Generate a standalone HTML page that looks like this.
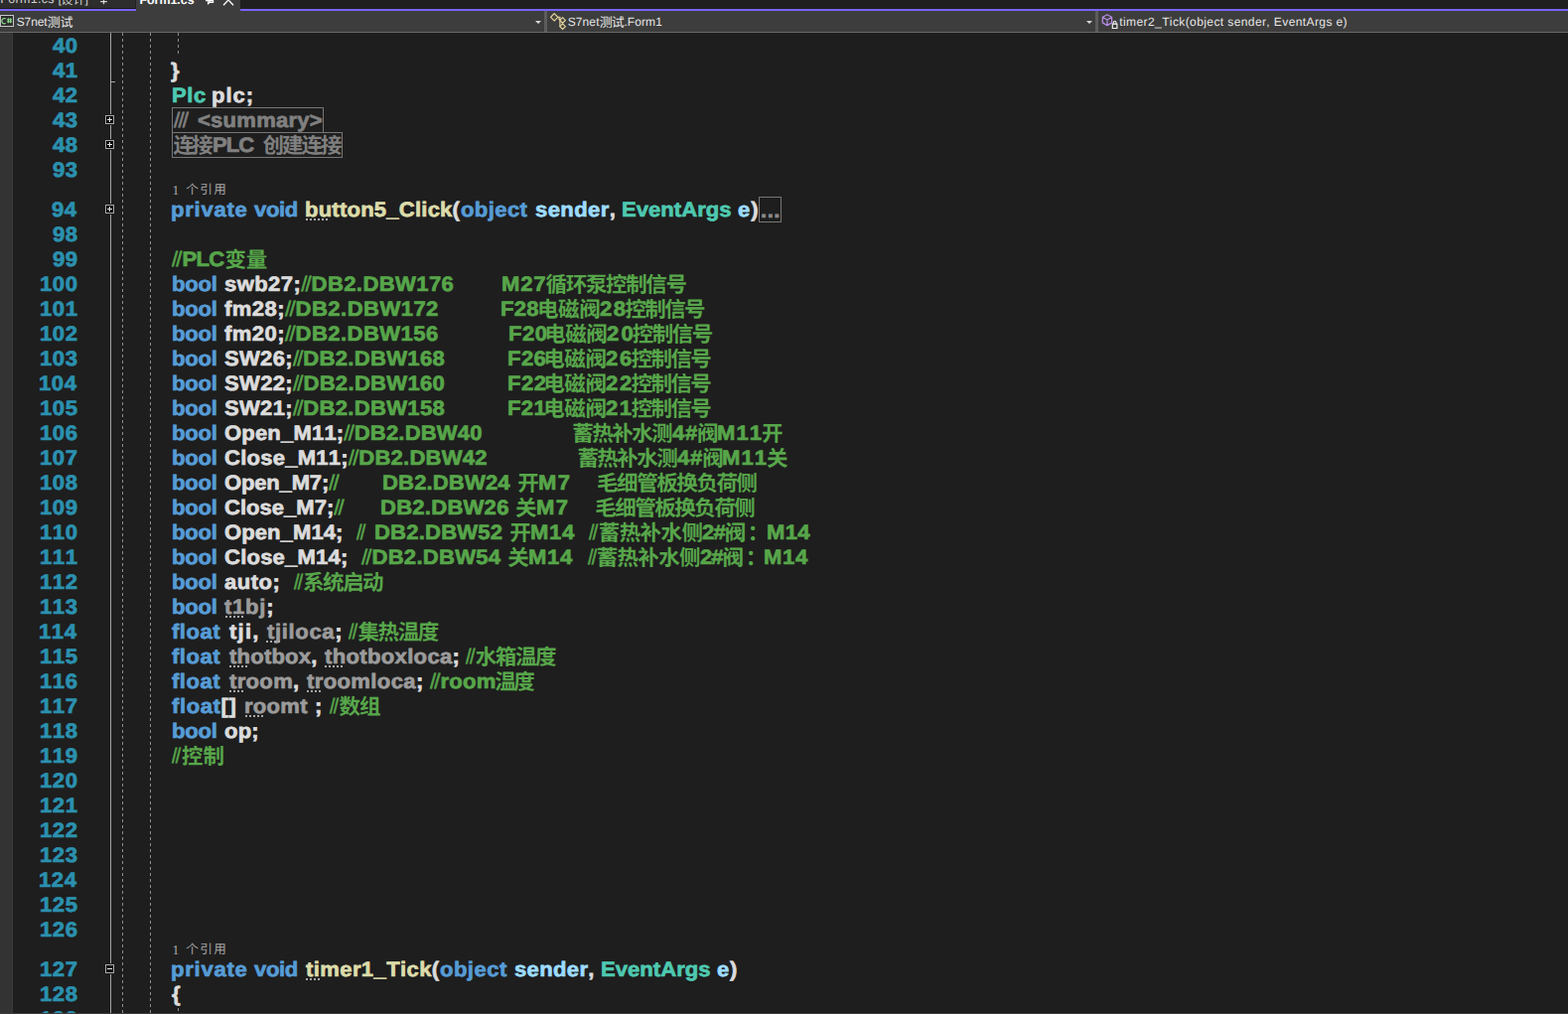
<!DOCTYPE html>
<html lang="zh"><head><meta charset="utf-8"><title>Form1.cs</title>
<style>
html,body{margin:0;padding:0;background:#1e1e1e}
body{width:1579px;height:1021px;overflow:hidden;position:relative;font-family:"Liberation Sans",sans-serif;text-rendering:geometricPrecision;font-kerning:none}
/* tab strip */
#tabs{position:absolute;left:0;top:0;width:1579px;height:11px;background:#1f1f1f;overflow:hidden}
.ic{position:absolute;overflow:visible}
#tab1{position:absolute;left:0;top:0;width:136px;height:8px;background:#2d2d2d;border-bottom:1px solid #1b1b17;border-right:1px solid #202020;box-sizing:content-box;overflow:hidden}
#tab2{position:absolute;left:0;top:0;width:242px;height:11px;background:linear-gradient(to right,transparent 137px,#3d3d3d 137px);overflow:hidden}
.tt{position:absolute;white-space:pre;font-size:12.5px;line-height:14px}
#accent{position:absolute;left:0;top:9px;width:137px;height:2px;background:#7864f8}
#accent2{position:absolute;left:242px;top:9px;width:1337px;height:2px;background:#7864f8}
#cs{position:absolute;left:0;top:4px;width:12px;height:10px;border:1px solid #c4c4c4;background:#2e2e2e}
#cs span{position:absolute;left:1px;top:0;font-size:8px;line-height:10px;color:transparent}
/* nav bar */
#nav{position:absolute;left:0;top:11px;width:1579px;height:21px;background:#3d3d3d;border-bottom:1px solid #686868}
.sep{position:absolute;top:0;width:3px;height:21px;background:#5c5c5c}
.arr{position:absolute;top:10px;width:0;height:0;border-left:3px solid transparent;border-right:3px solid transparent;border-top:3.5px solid #d8d8d8}
.nt{position:absolute;top:1px;white-space:pre;font-size:12px;line-height:21px;color:#e6e6e6}
/* editor */
#margin{position:absolute;left:0;top:33px;width:12px;height:988px;background:#333;border-right:1px solid #393939}
#bottom{position:absolute;left:0;top:1020px;width:1579px;height:1px;background:#3c3c3c}
#oline{position:absolute;left:111px;top:33px;width:1px;height:987px;background:#a6a6a6}
.tick{position:absolute;left:112px;top:82px;width:4px;height:1px;background:#a6a6a6}
.gd{position:absolute;width:1px;background:repeating-linear-gradient(to bottom,#8e8e8e 0,#8e8e8e 3px,transparent 3px,transparent 6px)}
.pm{position:absolute;left:105px;width:7px;height:7px;background:#000;border:1px solid #a8a8a8;outline:1px solid #1e1e1e;margin:1px}
.pm .h{position:absolute;left:1px;top:3px;width:5px;height:1px;background:#e4e4e4}
.pm .v{position:absolute;left:3px;top:1px;width:1px;height:5px;background:#e4e4e4}
.ln{position:absolute;left:0;width:1579px;height:25px}
.t{position:absolute;top:1.4px;transform-origin:0 0;transform:scaleX(1.055);white-space:pre;font-weight:bold;font-size:20.9px;line-height:25px;height:25px;-webkit-text-stroke:0.7px}
.t .s{font-weight:normal;letter-spacing:-1.7px;margin-right:1.7px;-webkit-text-stroke:0.5px}
.ck{color:#569cd6}.ct{color:#4ec9b0}.cw{color:#dcdcdc}.cm{color:#dcdcaa}.cp{color:#9cdcfe}.cc{color:#57a64a}.cg{color:#9b9b9b}.co{color:#808080}.cx{color:#8a8a8a}
.n{color:#2b91af;letter-spacing:.55px}
.cj{position:absolute;top:0;height:25px;overflow:hidden}
.cj svg{position:absolute;left:0;top:0}
.cj svg text,.cl svg text{font-family:"Liberation Sans","Noto Sans CJK SC",sans-serif}
.ln .cj svg text{font-size:21.5px;font-weight:bold}
.d{position:absolute;top:22px;height:2px;background:repeating-linear-gradient(to right,#a8a8a8 0,#a8a8a8 2px,transparent 2px,transparent 4px)}
.b{position:absolute;top:0;height:24px;border:1px solid #767676}
.b.e{top:0}
.cl{position:absolute;left:0;width:400px;height:15px}
.cl .one{position:absolute;left:173.4px;top:.5px;font-size:13.5px;line-height:15px;color:#a8a8a8;font-family:"Liberation Serif",serif}
</style></head>
<body>
<div id="tabs">
  <div id="tab1"><span class="tt" style="left:0.3px;top:-8px;color:#d0d0d0;letter-spacing:.3px">Form1.cs [</span><span class="cj" style="left:60px;width:27px;height:9px"><svg width="27" height="9" fill="#d0d0d0"><text x="1.30 13.40" y="4.1" font-size="12.2">设计</text></svg></span><span class="tt" style="left:85.6px;top:-8px;color:#d0d0d0">]</span>
    <svg class="ic" style="left:100px;top:0" width="10" height="6" viewBox="0 0 10 6"><path d="M4.5 0v4.2M1.2 1.6h6.6" stroke="#d8d8d8" stroke-width="1.2" fill="none"/></svg></div>
  <div id="tab2"><span class="tt" style="left:140.4px;top:-7.2px;color:#ffffff;font-weight:bold;letter-spacing:-.05px">Form1.cs</span>
    <svg class="ic" style="left:206px;top:0" width="10" height="6" viewBox="0 0 10 6"><path d="M1 0.6h8M5.2 0v2.4h3.3V0M3.6 1.5l0 2.2l1.4-1.2" stroke="#fff" stroke-width="1.3" fill="none"/></svg>
    <svg class="ic" style="left:224px;top:0" width="12" height="6" viewBox="0 0 12 6"><path d="M1 5.2L6.5-0.6M11 5.2L5.5-0.6" stroke="#fff" stroke-width="1.3" fill="none"/></svg></div>
</div>
<div id="accent"></div><div id="accent2"></div>
<div id="nav">
  <div class="sep" style="left:548px"></div><div class="sep" style="left:1103px"></div>
  <div class="arr" style="left:539px"></div><div class="arr" style="left:1094px"></div>
  <div id="cs"><svg width="12" height="10" viewBox="0 0 12 10" style="position:absolute;left:0;top:0"><path d="M4.7 3.1A2.3 2.7 0 1 0 4.7 7.3" fill="none" stroke="#8fe48f" stroke-width="1.1"/><path d="M7.4 2.2v5M9.7 2.2v5M5.9 3.8h5.3M5.9 5.8h5.3" fill="none" stroke="#8fe48f" stroke-width="1"/></svg><span>C#</span></div>
  <svg class="ic" style="left:553px;top:1px" width="19" height="19" viewBox="0 0 19 19"><g fill="#4a463c" stroke="#e6d7a0" stroke-width="1.1"><path d="M5.2 1.6l3.7 3.7l-3.7 3.7l-3.7-3.7z"/><path d="M13.6 5.6l2.8 2.8l-2.8 2.8l-2.8-2.8z"/><path d="M13.6 11.9l2.8 2.8l-2.8 2.8l-2.8-2.8z"/></g><path d="M8.9 5.3l2 .0v9.4h0M9.3 6.5l1.6 1.9" fill="none" stroke="#e6d7a0" stroke-width="1.1"/></svg>
  <svg class="ic" style="left:1109px;top:3px" width="17" height="16" viewBox="0 0 17 16"><path d="M6 0.8l4.6 2.5v5.6L6 11.6L1.3 8.9V3.3zM1.3 3.3L6 6l4.6-2.7M6 6v5.6" fill="none" stroke="#b58ae6" stroke-width="1.25" stroke-linejoin="round"/><path d="M11.3 10.2h4.6v4.3h-4.6z" fill="#3d3d3d" stroke="#f0f0f0" stroke-width="1.2"/><path d="M12.3 10.2V8.6a1.3 1.3 0 0 1 2.6 0v1.6" fill="none" stroke="#f0f0f0" stroke-width="1.1"/></svg>
  <span class="nt" style="left:16.76px;letter-spacing:-0.13px">S7net</span><span class="cj" style="left:47px;width:28px;height:21px"><svg width="28" height="21" fill="#e6e6e6"><text x="0.81 13.43" y="15.6" font-size="13">测试</text></svg></span><span class="nt" style="left:571.76px;letter-spacing:0.09px">S7net</span><span class="cj" style="left:603px;width:28px;height:21px"><svg width="28" height="21" fill="#e6e6e6"><text x="0.71 12.73" y="15.6" font-size="13">测试</text></svg></span><span class="nt" style="left:628.40px;letter-spacing:0.09px">.Form1</span><span class="nt" style="left:1127.32px;letter-spacing:0.40px">timer2_Tick(object sender, EventArgs e)</span>
</div>
<div id="margin"></div>
<div id="oline"></div><div class="tick"></div>
<div class="gd" style="left:123px;top:33px;height:987px"></div>
<div class="gd" style="left:151px;top:33px;height:987px"></div>
<div class="gd" style="left:179px;top:33px;height:24px"></div>
<div class="gd" style="left:179px;top:1015px;height:4px"></div>
<div class="pm" style="top:115px"><b class="h"></b><b class="v"></b></div><div class="pm" style="top:140px"><b class="h"></b><b class="v"></b></div><div class="pm" style="top:205px"><b class="h"></b><b class="v"></b></div><div class="pm" style="top:970px;background:#141414"><b class="h"></b></div>
<div class="ln" style="top:33px"><span class="t n" style="left:52.83px">40</span></div>
<div class="ln" style="top:58px"><span class="t n" style="left:52.54px">41</span><span class="t" style="left:172.34px;letter-spacing:0.00px"><span class="cw">}</span></span></div>
<div class="ln" style="top:83px"><span class="t n" style="left:52.80px">42</span><span class="t" style="left:172.59px;letter-spacing:0.52px"><span class="ct">Plc</span></span><span class="t" style="left:213.42px;letter-spacing:0.89px"><span class="cw">plc;</span></span></div>
<div class="ln" style="top:108px"><span class="t n" style="left:52.72px">43</span><span class="b" style="left:173px;width:151px"></span><span class="t" style="left:175.07px;transform:scaleX(1.076);letter-spacing:0.00px"><span class="co s">///</span></span><span class="t" style="left:199.34px;letter-spacing:0.23px"><span class="co">&lt;summary&gt;</span></span></div>
<div class="ln" style="top:133px"><span class="t n" style="left:52.60px">48</span><span class="b" style="left:173px;width:170px"></span><span class="cj" style="left:172px;width:47px"><svg width="47" height="25" fill="#808080"><text x="2.54 21.32" y="21">连接</text></svg></span><span class="t" style="left:214.09px;letter-spacing:-0.93px"><span class="co">PLC</span></span><span class="cj" style="left:262px;width:87px"><svg width="87" height="25" fill="#808080"><text x="2.53 22.03 41.53 61.02" y="21">创建连接</text></svg></span></div>
<div class="ln" style="top:158px"><span class="t n" style="left:52.72px">93</span></div>
<div class="ln" style="top:198px"><span class="t n" style="left:52.04px">94</span><span class="t" style="left:172.32px;letter-spacing:0.71px"><span class="ck">private</span></span><span class="t" style="left:256.08px;letter-spacing:-0.32px"><span class="ck">void</span></span><span class="t" style="left:306.82px;letter-spacing:0.21px"><span class="cm">button5_Click</span><span class="cw">(</span></span><span class="t" style="left:464.31px;letter-spacing:0.39px"><span class="ck">object</span></span><span class="t" style="left:538.89px;letter-spacing:0.38px"><span class="cp">sender</span><span class="cw">,</span></span><span class="t" style="left:625.89px;letter-spacing:0.04px"><span class="ct">EventArgs</span></span><span class="t" style="left:743.01px;letter-spacing:1.05px"><span class="cp">e</span><span class="cw">)</span></span><span class="b e" style="left:764px;width:21px"><span class="t" style="left:1px;top:1px;letter-spacing:0.5px"><span class="cx">...</span></span></span><span class="d" style="left:308px;width:22px"></span></div>
<div class="ln" style="top:223px"><span class="t n" style="left:52.60px">98</span></div>
<div class="ln" style="top:248px"><span class="t n" style="left:52.74px">99</span><span class="t" style="left:173.46px;letter-spacing:-0.65px"><span class="cc s">//</span><span class="cc">PLC</span></span><span class="cj" style="left:225px;width:49px"><svg width="49" height="25" fill="#57a64a"><text x="1.38 22.78" y="21">变量</text></svg></span></div>
<div class="ln" style="top:273px"><span class="t n" style="left:40.00px">100</span><span class="t" style="left:172.72px;letter-spacing:-0.20px"><span class="ck">bool</span></span><span class="t" style="left:225.99px;letter-spacing:0.38px"><span class="cw">swb27;</span><span class="cc s">//</span><span class="cc">DB2.DBW176</span></span><span class="t" style="left:505.49px;letter-spacing:0.77px"><span class="cc">M27</span></span><span class="cj" style="left:548px;width:148px"><svg width="148" height="25" fill="#57a64a"><text x="1.57 21.73 41.89 62.05 82.21 102.37 122.53" y="21">循环泵控制信号</text></svg></span></div>
<div class="ln" style="top:298px"><span class="t n" style="left:39.71px">101</span><span class="t" style="left:172.72px;letter-spacing:-0.20px"><span class="ck">bool</span></span><span class="t" style="left:226.39px;letter-spacing:0.44px"><span class="cw">fm28;</span><span class="cc s">//</span><span class="cc">DB2.DBW172</span></span><span class="t" style="left:504.39px;letter-spacing:0.25px"><span class="cc">F28</span></span><span class="cj" style="left:541px;width:68px"><svg width="68" height="25" fill="#57a64a"><text x="-0.09 21.09 42.28" y="21">电磁阀</text></svg></span><span class="t" style="left:603.60px;letter-spacing:1.40px"><span class="cc">28</span></span><span class="cj" style="left:628px;width:87px"><svg width="87" height="25" fill="#57a64a"><text x="1.44 21.30 41.16 61.03" y="21">控制信号</text></svg></span></div>
<div class="ln" style="top:323px"><span class="t n" style="left:39.98px">102</span><span class="t" style="left:172.72px;letter-spacing:-0.20px"><span class="ck">bool</span></span><span class="t" style="left:226.39px;letter-spacing:0.43px"><span class="cw">fm20;</span><span class="cc s">//</span><span class="cc">DB2.DBW156</span></span><span class="t" style="left:511.59px;letter-spacing:0.46px"><span class="cc">F20</span></span><span class="cj" style="left:548px;width:67px"><svg width="67" height="25" fill="#57a64a"><text x="0.21 21.19 42.18" y="21">电磁阀</text></svg></span><span class="t" style="left:610.60px;letter-spacing:2.09px"><span class="cc">20</span></span><span class="cj" style="left:635px;width:87px"><svg width="87" height="25" fill="#57a64a"><text x="1.84 21.77 41.70 61.63" y="21">控制信号</text></svg></span></div>
<div class="ln" style="top:348px"><span class="t n" style="left:39.89px">103</span><span class="t" style="left:172.72px;letter-spacing:-0.20px"><span class="ck">bool</span></span><span class="t" style="left:226.13px;letter-spacing:0.29px"><span class="cw">SW26;</span><span class="cc s">//</span><span class="cc">DB2.DBW168</span></span><span class="t" style="left:510.59px;letter-spacing:0.40px"><span class="cc">F26</span></span><span class="cj" style="left:547px;width:67px"><svg width="67" height="25" fill="#57a64a"><text x="0.31 21.34 42.38" y="21">电磁阀</text></svg></span><span class="t" style="left:609.80px;letter-spacing:1.61px"><span class="cc">26</span></span><span class="cj" style="left:634px;width:87px"><svg width="87" height="25" fill="#57a64a"><text x="1.74 21.60 41.46 61.33" y="21">控制信号</text></svg></span></div>
<div class="ln" style="top:373px"><span class="t n" style="left:39.21px">104</span><span class="t" style="left:172.72px;letter-spacing:-0.20px"><span class="ck">bool</span></span><span class="t" style="left:226.13px;letter-spacing:0.30px"><span class="cw">SW22;</span><span class="cc s">//</span><span class="cc">DB2.DBW160</span></span><span class="t" style="left:510.59px;letter-spacing:0.45px"><span class="cc">F22</span></span><span class="cj" style="left:547px;width:67px"><svg width="67" height="25" fill="#57a64a"><text x="0.31 21.34 42.38" y="21">电磁阀</text></svg></span><span class="t" style="left:609.80px;letter-spacing:1.69px"><span class="cc">22</span></span><span class="cj" style="left:634px;width:87px"><svg width="87" height="25" fill="#57a64a"><text x="1.74 21.60 41.46 61.33" y="21">控制信号</text></svg></span></div>
<div class="ln" style="top:398px"><span class="t n" style="left:39.71px">105</span><span class="t" style="left:172.72px;letter-spacing:-0.20px"><span class="ck">bool</span></span><span class="t" style="left:226.13px;letter-spacing:0.29px"><span class="cw">SW21;</span><span class="cc s">//</span><span class="cc">DB2.DBW158</span></span><span class="t" style="left:510.59px;letter-spacing:0.32px"><span class="cc">F21</span></span><span class="cj" style="left:547px;width:67px"><svg width="67" height="25" fill="#57a64a"><text x="0.31 21.34 42.38" y="21">电磁阀</text></svg></span><span class="t" style="left:609.80px;letter-spacing:1.43px"><span class="cc">21</span></span><span class="cj" style="left:634px;width:87px"><svg width="87" height="25" fill="#57a64a"><text x="1.74 21.60 41.46 61.33" y="21">控制信号</text></svg></span></div>
<div class="ln" style="top:423px"><span class="t n" style="left:39.89px">106</span><span class="t" style="left:172.72px;letter-spacing:-0.20px"><span class="ck">bool</span></span><span class="t" style="left:226.06px;letter-spacing:0.16px"><span class="cw">Open_M11;</span><span class="cc s">//</span><span class="cc">DB2.DBW40</span></span><span class="cj" style="left:575px;width:106px"><svg width="106" height="25" fill="#57a64a"><text x="1.30 21.24 41.19 61.14 81.09" y="21">蓄热补水测</text></svg></span><span class="t" style="left:677.34px;letter-spacing:0.68px"><span class="cc">4#</span></span><span class="cj" style="left:701px;width:27px"><svg width="27" height="25" fill="#57a64a"><text x="1.07" y="21">阀</text></svg></span><span class="t" style="left:722.39px;letter-spacing:1.03px"><span class="cc">M11</span></span><span class="cj" style="left:765px;width:28px"><svg width="28" height="25" fill="#57a64a"><text x="2.05" y="21">开</text></svg></span></div>
<div class="ln" style="top:448px"><span class="t n" style="left:40.06px">107</span><span class="t" style="left:172.72px;letter-spacing:-0.20px"><span class="ck">bool</span></span><span class="t" style="left:226.06px;letter-spacing:0.22px"><span class="cw">Close_M11;</span><span class="cc s">//</span><span class="cc">DB2.DBW42</span></span><span class="cj" style="left:580px;width:106px"><svg width="106" height="25" fill="#57a64a"><text x="1.40 21.34 41.29 61.24 81.19" y="21">蓄热补水测</text></svg></span><span class="t" style="left:682.44px;letter-spacing:0.68px"><span class="cc">4#</span></span><span class="cj" style="left:706px;width:27px"><svg width="27" height="25" fill="#57a64a"><text x="1.17" y="21">阀</text></svg></span><span class="t" style="left:727.49px;letter-spacing:1.03px"><span class="cc">M11</span></span><span class="cj" style="left:770px;width:28px"><svg width="28" height="25" fill="#57a64a"><text x="2.05" y="21">关</text></svg></span></div>
<div class="ln" style="top:473px"><span class="t n" style="left:39.77px">108</span><span class="t" style="left:172.72px;letter-spacing:-0.20px"><span class="ck">bool</span></span><span class="t" style="left:226.06px;letter-spacing:-0.17px"><span class="cw">Open_M7;</span><span class="cc s">//</span></span><span class="t" style="left:385.09px;letter-spacing:0.14px"><span class="cc">DB2.DBW24</span></span><span class="cj" style="left:520px;width:28px"><svg width="28" height="25" fill="#57a64a"><text x="1.25" y="21">开</text></svg></span><span class="t" style="left:541.89px;letter-spacing:1.21px"><span class="cc">M7</span></span><span class="cj" style="left:600px;width:167px"><svg width="167" height="25" fill="#57a64a"><text x="1.02 21.11 41.19 61.28 81.36 101.45 121.53 141.62" y="21">毛细管板换负荷侧</text></svg></span></div>
<div class="ln" style="top:498px"><span class="t n" style="left:39.91px">109</span><span class="t" style="left:172.72px;letter-spacing:-0.20px"><span class="ck">bool</span></span><span class="t" style="left:226.06px;letter-spacing:-0.00px"><span class="cw">Close_M7;</span><span class="cc s">//</span></span><span class="t" style="left:383.09px;letter-spacing:0.24px"><span class="cc">DB2.DBW26</span></span><span class="cj" style="left:518px;width:27px"><svg width="27" height="25" fill="#57a64a"><text x="1.05" y="21">关</text></svg></span><span class="t" style="left:539.89px;letter-spacing:1.21px"><span class="cc">M7</span></span><span class="cj" style="left:598px;width:167px"><svg width="167" height="25" fill="#57a64a"><text x="1.22 21.24 41.25 61.27 81.28 101.29 121.31 141.32" y="21">毛细管板换负荷侧</text></svg></span></div>
<div class="ln" style="top:523px"><span class="t n" style="left:40.00px">110</span><span class="t" style="left:172.72px;letter-spacing:-0.20px"><span class="ck">bool</span></span><span class="t" style="left:226.06px;letter-spacing:0.07px"><span class="cw">Open_M14;</span></span><span class="t" style="left:358.64px;transform:scaleX(0.942);letter-spacing:0.00px"><span class="cc s">//</span></span><span class="t" style="left:377.29px;letter-spacing:0.19px"><span class="cc">DB2.DBW52</span></span><span class="cj" style="left:512px;width:27px"><svg width="27" height="25" fill="#57a64a"><text x="1.35" y="21">开</text></svg></span><span class="t" style="left:533.89px;letter-spacing:0.61px"><span class="cc">M14</span></span><span class="t" style="left:593.44px;transform:scaleX(0.942);letter-spacing:0.00px"><span class="cc s">//</span></span><span class="cj" style="left:602px;width:110px"><svg width="110" height="25" fill="#57a64a"><text x="0.80 21.70 42.61 63.51 84.42" y="21">蓄热补水侧</text></svg></span><span class="t" style="left:706.90px;letter-spacing:-0.80px"><span class="cc">2#</span></span><span class="cj" style="left:729px;width:26px"><svg width="26" height="25" fill="#57a64a"><text x="0.72" y="21">阀</text></svg></span><span class="cj" style="left:754px;width:12px"><svg width="12" height="25" fill="#57a64a"><text x="-1.38" y="21">：</text></svg></span><span class="t" style="left:771.99px;letter-spacing:0.27px"><span class="cc">M14</span></span></div>
<div class="ln" style="top:548px"><span class="t n" style="left:39.71px">111</span><span class="t" style="left:172.72px;letter-spacing:-0.20px"><span class="ck">bool</span></span><span class="t" style="left:226.06px;letter-spacing:0.20px"><span class="cw">Close_M14;</span></span><span class="t" style="left:363.66px;letter-spacing:0.27px"><span class="cc s">//</span><span class="cc">DB2.DBW54</span></span><span class="cj" style="left:510px;width:27px"><svg width="27" height="25" fill="#57a64a"><text x="1.30" y="21">关</text></svg></span><span class="t" style="left:531.89px;letter-spacing:0.61px"><span class="cc">M14</span></span><span class="t" style="left:591.74px;transform:scaleX(0.942);letter-spacing:0.00px"><span class="cc s">//</span></span><span class="cj" style="left:600px;width:110px"><svg width="110" height="25" fill="#57a64a"><text x="0.80 21.58 42.36 63.14 83.92" y="21">蓄热补水侧</text></svg></span><span class="t" style="left:704.60px;letter-spacing:-0.99px"><span class="cc">2#</span></span><span class="cj" style="left:726px;width:27px"><svg width="27" height="25" fill="#57a64a"><text x="1.52" y="21">阀</text></svg></span><span class="cj" style="left:752px;width:12px"><svg width="12" height="25" fill="#57a64a"><text x="-1.38" y="21">：</text></svg></span><span class="t" style="left:769.49px;letter-spacing:0.61px"><span class="cc">M14</span></span></div>
<div class="ln" style="top:573px"><span class="t n" style="left:39.98px">112</span><span class="t" style="left:172.72px;letter-spacing:-0.20px"><span class="ck">bool</span></span><span class="t" style="left:226.12px;letter-spacing:0.48px"><span class="cw">auto;</span></span><span class="t" style="left:295.73px;transform:scaleX(0.932);letter-spacing:0.00px"><span class="cc s">//</span></span><span class="cj" style="left:303px;width:87px"><svg width="87" height="25" fill="#57a64a"><text x="1.98 22.00 42.02 62.03" y="21">系统启动</text></svg></span></div>
<div class="ln" style="top:598px"><span class="t n" style="left:39.89px">113</span><span class="t" style="left:172.72px;letter-spacing:-0.20px"><span class="ck">bool</span></span><span class="t" style="left:226.40px;letter-spacing:0.71px"><span class="cg">t1bj</span><span class="cw">;</span></span><span class="d" style="left:227px;width:18px"></span></div>
<div class="ln" style="top:623px"><span class="t n" style="left:39.21px">114</span><span class="t" style="left:173.39px;letter-spacing:0.49px"><span class="ck">float</span></span><span class="t" style="left:231.00px;letter-spacing:1.17px"><span class="cw">tji,</span></span><span class="t" style="left:268.50px;letter-spacing:0.62px"><span class="cg">tjiloca</span><span class="cw">;</span></span><span class="t" style="left:350.73px;transform:scaleX(0.923);letter-spacing:0.00px"><span class="cc s">//</span></span><span class="cj" style="left:358px;width:89px"><svg width="89" height="25" fill="#57a64a"><text x="2.38 22.52 42.66 62.80" y="21">集热温度</text></svg></span><span class="d" style="left:268px;width:14px"></span></div>
<div class="ln" style="top:648px"><span class="t n" style="left:39.71px">115</span><span class="t" style="left:173.39px;letter-spacing:0.49px"><span class="ck">float</span></span><span class="t" style="left:231.00px;letter-spacing:0.20px"><span class="cg">thotbox</span><span class="cw">,</span></span><span class="t" style="left:326.80px;letter-spacing:0.32px"><span class="cg">thotboxloca</span><span class="cw">;</span></span><span class="t" style="left:468.84px;transform:scaleX(0.951);letter-spacing:0.00px"><span class="cc s">//</span></span><span class="cj" style="left:477px;width:88px"><svg width="88" height="25" fill="#57a64a"><text x="1.73 21.85 41.98 62.10" y="21">水箱温度</text></svg></span><span class="d" style="left:231px;width:18px"></span><span class="d" style="left:327px;width:18px"></span></div>
<div class="ln" style="top:673px"><span class="t n" style="left:39.89px">116</span><span class="t" style="left:173.39px;letter-spacing:0.49px"><span class="ck">float</span></span><span class="t" style="left:231.00px;letter-spacing:0.31px"><span class="cg">troom</span><span class="cw">,</span></span><span class="t" style="left:309.10px;letter-spacing:0.36px"><span class="cg">troomloca</span><span class="cw">;</span></span><span class="t" style="left:432.56px;letter-spacing:0.28px"><span class="cc s">//</span><span class="cc">room</span></span><span class="cj" style="left:496px;width:47px"><svg width="47" height="25" fill="#57a64a"><text x="2.20 21.30" y="21">温度</text></svg></span><span class="d" style="left:231px;width:14px"></span><span class="d" style="left:309px;width:14px"></span></div>
<div class="ln" style="top:698px"><span class="t n" style="left:40.06px">117</span><span class="t" style="left:173.39px;letter-spacing:0.56px"><span class="ck">float</span><span class="cw">[]</span></span><span class="t" style="left:245.82px;letter-spacing:0.27px"><span class="cg">roomt</span></span><span class="t" style="left:317.22px;letter-spacing:0.00px"><span class="cw">;</span></span><span class="t" style="left:332.03px;transform:scaleX(0.923);letter-spacing:0.00px"><span class="cc s">//</span></span><span class="cj" style="left:340px;width:48px"><svg width="48" height="25" fill="#57a64a"><text x="1.53 22.11" y="21">数组</text></svg></span><span class="d" style="left:247px;width:18px"></span></div>
<div class="ln" style="top:723px"><span class="t n" style="left:39.77px">118</span><span class="t" style="left:172.72px;letter-spacing:-0.20px"><span class="ck">bool</span></span><span class="t" style="left:225.91px;letter-spacing:0.17px"><span class="cw">op;</span></span></div>
<div class="ln" style="top:748px"><span class="t n" style="left:39.91px">119</span><span class="t" style="left:173.43px;transform:scaleX(0.923);letter-spacing:0.00px"><span class="cc s">//</span></span><span class="cj" style="left:181px;width:49px"><svg width="49" height="25" fill="#57a64a"><text x="1.94 23.43" y="21">控制</text></svg></span></div>
<div class="ln" style="top:773px"><span class="t n" style="left:40.00px">120</span></div>
<div class="ln" style="top:798px"><span class="t n" style="left:39.71px">121</span></div>
<div class="ln" style="top:823px"><span class="t n" style="left:39.98px">122</span></div>
<div class="ln" style="top:848px"><span class="t n" style="left:39.89px">123</span></div>
<div class="ln" style="top:873px"><span class="t n" style="left:39.21px">124</span></div>
<div class="ln" style="top:898px"><span class="t n" style="left:39.71px">125</span></div>
<div class="ln" style="top:923px"><span class="t n" style="left:39.89px">126</span></div>
<div class="ln" style="top:963px"><span class="t n" style="left:40.06px">127</span><span class="t" style="left:172.32px;letter-spacing:0.71px"><span class="ck">private</span></span><span class="t" style="left:256.08px;letter-spacing:-0.32px"><span class="ck">void</span></span><span class="t" style="left:308.00px;letter-spacing:0.37px"><span class="cm">timer1_Tick</span><span class="cw">(</span></span><span class="t" style="left:443.01px;letter-spacing:0.45px"><span class="ck">object</span></span><span class="t" style="left:517.99px;letter-spacing:0.32px"><span class="cp">sender</span><span class="cw">,</span></span><span class="t" style="left:604.59px;letter-spacing:0.04px"><span class="ct">EventArgs</span></span><span class="t" style="left:722.01px;letter-spacing:0.76px"><span class="cp">e</span><span class="cw">)</span></span><span class="d" style="left:308px;width:14px"></span></div>
<div class="ln" style="top:988px"><span class="t n" style="left:39.77px">128</span><span class="t" style="left:173.11px;letter-spacing:0.00px"><span class="cw">{</span></span></div>
<div class="ln" style="top:1013px"><span class="t n" style="left:39.91px">129</span></div>
<div class="cl" style="top:183px"><span class="one">1</span><svg width="70" height="15" fill="#a4a4a4" style="position:absolute;left:172px;top:0"><text x="15.30 29.30 43.30" y="12.2" font-size="12.6">个引用</text></svg></div>
<div class="cl" style="top:948px"><span class="one">1</span><svg width="70" height="15" fill="#a4a4a4" style="position:absolute;left:172px;top:0"><text x="15.30 29.30 43.30" y="12.2" font-size="12.6">个引用</text></svg></div>
<div id="bottom"></div>
</body></html>
